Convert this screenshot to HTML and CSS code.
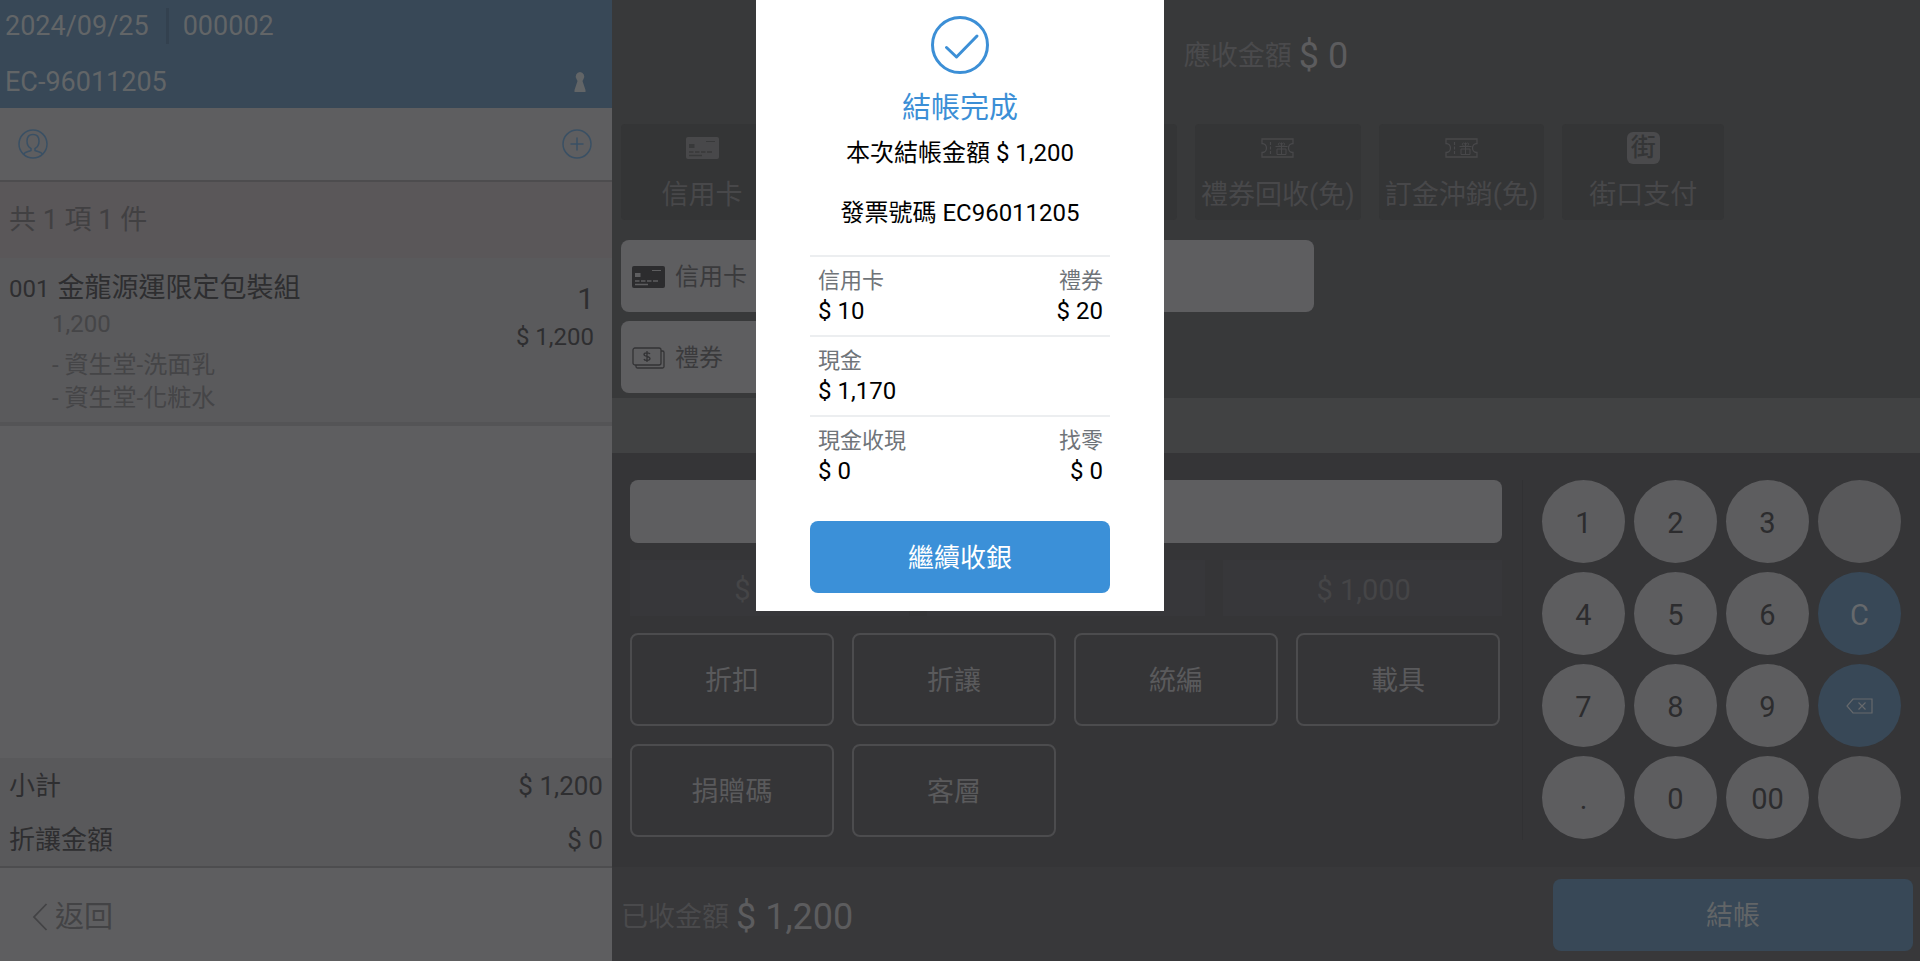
FILE: index.html
```html
<!DOCTYPE html>
<html lang="zh-Hant">
<head>
<meta charset="utf-8">
<meta name="viewport" content="width=device-width, initial-scale=1">
<title>結帳完成</title>
<link rel="stylesheet" href="styles.css">
</head>
<body>
<svg class="defs" aria-hidden="true">
  <symbol id="ticket" viewBox="0 0 33 20">
    <path d="M1 1h31v4.500a4.500 4.500 0 0 0 0 9V19H1v-4.500a4.500 4.500 0 0 0 0-9z" fill="none" stroke="currentColor" stroke-width="1.300"/>
    <path d="M9.500 4v12" stroke="currentColor" stroke-width="1.200" stroke-dasharray="3 1.500"/>
    <path d="M14.500 8.500h12M16 11v5.500h9V11zM20.500 4.500v12M20.500 8.500c-3.500 0-4-3.500-2-3.500s2 3.500 2 3.500 0-3.500 2-3.500 1.500 3.500-2 3.500" fill="none" stroke="currentColor" stroke-width="1"/>
  </symbol>
  <symbol id="card" viewBox="0 0 33 22">
    <rect width="33" height="22" rx="2" fill="currentColor"/>
    <g class="card-ink"><rect x="3" y="7" width="5.500" height="4"/><rect x="20" y="4" width="9" height="1"/>
    <path d="M3 15h4.500M9 15h4.500M15 15h4.500M21 15h5M3 18.500h13" fill="none" stroke-width="1.300"/></g>
  </symbol>
</svg>
<div class="pos">
  <aside class="order">
    <header class="order-head">
      <div class="head-line"><span>2024/09/25</span><span class="head-sep"></span><span>000002</span></div>
      <div class="head-line head-last"><span>EC-96011205</span>
        <svg class="pawn" viewBox="0 0 12 20" aria-hidden="true"><path d="M6 0a4.500 4.500 0 0 1 3.500 7L8.500 9l3 9v2H.5v-2l3-9-1-2A4.500 4.500 0 0 1 6 0z" fill="currentColor"/></svg>
      </div>
    </header>
    <div class="member">
      <button class="round-btn" type="button" aria-label="會員"><svg viewBox="0 0 30 30" aria-hidden="true"><circle cx="15" cy="15" r="14"/><path d="M13 19.500c-2-1-4-3.500-4-7.500s2-6.500 6-6.500 6 2.500 6 6.500-2 6.500-4 7.500M13 19v2.500c-3 1.500-6 1-7.500 4M17 19v2.500c3 1.500 6 1 7.500 4"/></svg></button>
      <button class="round-btn" type="button" aria-label="新增"><svg viewBox="0 0 30 30" aria-hidden="true"><circle cx="15" cy="15" r="14"/><path d="M15 8.500v13M8.500 15h13"/></svg></button>
    </div>
    <div class="count">共 1 項 1 件</div>
    <article class="item">
      <div class="item-main">
        <h2 class="item-name"><span class="item-no">001</span>金龍源運限定包裝組</h2>
        <p class="item-price">1,200</p>
        <ul class="item-subs"><li>- 資生堂-洗面乳</li><li>- 資生堂-化粧水</li></ul>
      </div>
      <div class="item-sum"><span class="item-qty">1</span><span>$ 1,200</span></div>
    </article>
    <dl class="totals">
      <div class="total-row"><dt>小計</dt><dd>$ 1,200</dd></div>
      <div class="total-row"><dt>折讓金額</dt><dd>$ 0</dd></div>
    </dl>
    <footer class="order-foot">
      <button class="back" type="button"><svg viewBox="0 0 16 28" aria-hidden="true"><path d="M14.500 1 2 14l12.500 13" fill="none" stroke="currentColor" stroke-width="1.800"/></svg>返回</button>
    </footer>
  </aside>

  <main class="checkout">
    <section class="due sum"><span class="sum-label">應收金額</span><span class="sum-value">$ 0</span></section>
    <section class="methods">
      <button class="method" type="button"><span class="method-icon"><svg class="icon-card" aria-hidden="true"><use href="#card"/></svg></span>信用卡</button>
      <span class="method method-blank"></span>
      <span class="method method-blank"></span>
      <button class="method" type="button"><span class="method-icon"><svg class="icon-ticket" aria-hidden="true"><use href="#ticket"/></svg></span>禮券回收(免)</button>
      <button class="method" type="button"><span class="method-icon"><svg class="icon-ticket" aria-hidden="true"><use href="#ticket"/></svg></span>訂金沖銷(免)</button>
      <button class="method" type="button"><span class="method-icon street">街</span>街口支付</button>
    </section>
    <section class="paid">
      <div class="paid-card"><svg class="icon-card" aria-hidden="true"><use href="#card"/></svg>信用卡</div>
      <div class="paid-card"></div>
      <div class="paid-card"><svg class="icon-cash" viewBox="0 0 33 22" fill="none" stroke="currentColor" stroke-width="1.300" aria-hidden="true"><rect x="1" y="1" width="28" height="17" rx="2"/><path d="M29 4h1.500a1.500 1.500 0 0 1 1.500 1.500v14a1.500 1.500 0 0 1-1.500 1.500h-25A1.500 1.500 0 0 1 4 19.500V18M18 7c-.5-1.500-6-1.800-6 .5S18 9 18 11.500s-5.500 2.500-6 .5M15 4v11"/></svg>禮券</div>
    </section>
    <div class="band"></div>
    <section class="entry">
      <div class="entry-main">
        <input class="amount" type="text" aria-label="金額">
        <div class="quick"><button type="button">$ 100</button><span></span><button type="button">$ 1,000</button></div>
        <div class="actions">
          <button type="button">折扣</button><button type="button">折讓</button><button type="button">統編</button><button type="button">載具</button>
          <button type="button">捐贈碼</button><button type="button">客層</button>
        </div>
      </div>
      <div class="keypad">
        <button type="button">1</button><button type="button">2</button><button type="button">3</button><span class="key-off"></span>
        <button type="button">4</button><button type="button">5</button><button type="button">6</button><button class="key-blue" type="button">C</button>
        <button type="button">7</button><button type="button">8</button><button type="button">9</button><button class="key-blue" type="button" aria-label="刪除"><svg viewBox="0 0 27 16" fill="none" stroke="currentColor" stroke-width="1.200" aria-hidden="true"><path d="M7 1h19v14H7L1 8zM12.500 4.500l7 7M19.500 4.500l-7 7"/></svg></button>
        <button type="button">.</button><button type="button">0</button><button type="button">00</button><span class="key-off"></span>
      </div>
    </section>
    <footer class="pay-foot">
      <div class="sum"><span class="sum-label">已收金額</span><span class="sum-value">$ 1,200</span></div>
      <button class="pay" type="button">結帳</button>
    </footer>
  </main>

  <section class="dialog" role="dialog" aria-labelledby="done">
    <svg class="done-icon" viewBox="0 0 58 58" fill="none" stroke="currentColor" stroke-width="3" stroke-linecap="round" stroke-linejoin="round" aria-hidden="true"><circle cx="29" cy="29" r="27.500"/><path d="M15.500 31.500 25.500 41 46 20"/></svg>
    <h1 class="done-title" id="done">結帳完成</h1>
    <p class="done-line">本次結帳金額 $ 1,200</p>
    <p class="done-line">發票號碼 EC96011205</p>
    <div class="splits">
      <dl class="split"><div><dt>信用卡</dt><dd>$ 10</dd></div><div class="split-end"><dt>禮券</dt><dd>$ 20</dd></div></dl>
      <dl class="split"><div><dt>現金</dt><dd>$ 1,170</dd></div></dl>
      <dl class="split"><div><dt>現金收現</dt><dd>$ 0</dd></div><div class="split-end"><dt>找零</dt><dd>$ 0</dd></div></dl>
    </div>
    <button class="continue" type="button">繼續收銀</button>
  </section>
</div>
</body>
</html>
```
FILE: styles.css
```css
* { box-sizing: border-box; }
body, h1, h2, p, ul, dl, dd { margin: 0; padding: 0; }
h1, h2 { font-weight: 400; }
ul { list-style: none; }
body {
  font-family: Roboto, "Noto Sans CJK TC", sans-serif;
  font-size: 27px;
  line-height: 36px;
  background: #38393a;
}
button, input { font: inherit; color: inherit; border: 0; margin: 0; padding: 0; background: none; }
svg { display: block; }
.defs { position: absolute; width: 0; height: 0; }

.pos {
  position: relative;
  display: grid;
  grid-template-columns: 51fr 109fr;
  min-height: 100vh;
}

/* order column */
.order { display: flex; flex-direction: column; background: #5e5e60; color: #2e2e30; }
.order-head { height: 108px; padding: 8px 5px; background: #384857; color: #626567; }
.head-line { display: flex; align-items: center; height: 36px; }
.head-last { justify-content: space-between; margin-top: 20px; padding-right: 21px; }
.head-sep { width: 3px; height: 36px; margin: 0 14px 0 17px; background: #33414f; }
.pawn { width: 12px; height: 20px; }
.member {
  display: flex; align-items: center; justify-content: space-between;
  height: 74px; padding: 0 20px 0 18px; border-bottom: 2px solid #4d4c4e;
}
.round-btn svg { width: 30px; height: 30px; fill: none; stroke: #3a5064; stroke-width: 1.5; }
.count { padding: 20px 9px; background: #5a5759; color: #414042; }
.item {
  display: flex; justify-content: space-between;
  padding: 12px 18px 7px 9px; background: #5a5a5c; border-bottom: 4px solid #545456;
  font-size: 24px;
}
.item-name { font-size: 27px; }
.item-no { margin-right: 8px; font-size: 24px; }
.item-price, .item-subs { padding-left: 43px; color: #454547; }
.item-price { line-height: 34px; }
.item-subs { margin-top: 8px; line-height: 33px; }
.item-sum { display: flex; flex-direction: column; align-items: flex-end; padding-top: 11px; }
.item-qty { font-size: 30px; margin-bottom: 2px; }
.totals { margin-top: auto; background: #59595b; border-bottom: 2px solid #4d4d4f; font-size: 26px; }
.total-row { display: flex; justify-content: space-between; align-items: center; height: 54px; padding: 2px 9px 0; }
.order-foot { display: flex; align-items: center; height: 93px; padding: 4px 32px 0; }
.back { display: flex; align-items: center; gap: 7px; font-size: 29px; color: #434345; }
.back svg { width: 16px; height: 28px; }

/* payment column */
.checkout { display: flex; flex-direction: column; }
.sum { display: flex; align-items: center; gap: 7px; }
.sum-label { color: #4a4a4c; }
.sum-value { font-size: 36px; color: #5c5c5e; }
.due { justify-content: center; height: 108px; padding-top: 3px; }
.methods { display: flex; gap: 18px; padding: 16px 9px 20px; }
.method {
  display: flex; flex-direction: column; align-items: center; gap: 13px;
  min-width: 162px; height: 96px; padding: 8px 6px 0;
  background: #343536; color: #48484a; border-radius: 4px;
}
.method-blank { min-width: 179px; }
.method-icon { display: grid; place-items: center; width: 33px; height: 32px; }
.icon-card { width: 33px; height: 22px; }
.icon-ticket { width: 33px; height: 20px; }
.icon-cash { width: 33px; height: 22px; color: #333335; }
.card-ink { fill: var(--ink, #38393a); stroke: var(--ink, #38393a); stroke-width: 0; }
.street { border-radius: 6px; background: #4a4a4c; color: #343536; font-size: 25px; font-weight: 500; line-height: 32px; }
.paid { display: grid; grid-template-columns: repeat(2, 342px); gap: 9px; padding: 0 9px 5px; }
.paid-card {
  display: flex; align-items: center; gap: 10px; height: 72px; padding: 2px 11px 0;
  border-radius: 8px; background: #5e5e60; color: #3a3a3c; font-size: 24px;
}
.paid-card .icon-card { --ink: #5e5e60; color: #2c2c2e; }
.band { height: 55px; background: #414243; }
.entry { display: flex; flex: 1; padding: 27px 19px 27px 18px; background: #353537; }
.entry-main { flex: 1; padding-right: 20px; }
.amount { display: block; width: 100%; height: 63px; padding: 0 12px; border-radius: 8px; background: #5e5e60; color: #2e2e30; }
.quick { display: grid; grid-template-columns: repeat(3, 1fr); gap: 18px; margin: 17px 0; }
.quick > * { height: 56px; padding: 4px 0 0 2px; background: #37373a; color: #454547; font-size: 29px; }
.actions { display: grid; grid-template-columns: repeat(4, 1fr); gap: 18px; padding-right: 2px; }
.actions button { height: 93px; padding-top: 2px; border: 2px solid #4c4c4e; border-radius: 8px; color: #5a5a5c; }
.keypad {
  display: grid; grid-template-columns: repeat(4, 83px); grid-auto-rows: 83px; gap: 9px;
  align-content: start; padding-left: 19px; border-left: 1px solid #313133;
}
.keypad > * { padding-top: 2px; border-radius: 50%; background: #5d5d5f; color: #2c2c2e; font-size: 29px; }
.keypad .key-off { background: #58585a; }
.keypad .key-blue { background: #384857; color: #66696c; }
.keypad .key-blue:has(svg) { padding-top: 0; }
.key-blue svg { width: 27px; height: 16px; margin: 0 auto; }
.pay-foot { display: flex; align-items: center; justify-content: space-between; height: 94px; padding: 2px 7px 0 9px; background: #38383a; }
.pay-foot .sum { padding-top: 3px; }
.pay { width: 360px; height: 72px; padding-top: 2px; border-radius: 8px; background: #384857; color: #626567; }

/* completed-payment dialog */
.dialog {
  position: absolute; top: 0; left: 50%; transform: translateX(-50%);
  display: flex; flex-direction: column; align-items: center;
  width: 408px; padding: 16px 54px 18px; background: #fff; color: #000; font-size: 24px;
}
.done-icon { width: 58px; height: 58px; color: #3c8fd6; }
.done-title { margin-top: 16px; font-size: 29px; color: #3c8fd6; }
.done-line { margin-top: 9px; }
.done-line + .done-line { margin-top: 24px; }
.splits { align-self: stretch; margin: 24px 0 26px; }
.split { display: flex; justify-content: space-between; height: 80px; padding: 8px 7px 0 8px; border-top: 2px solid #eceef0; line-height: 31px; }
.split-end { text-align: right; }
.split dt { font-size: 22px; color: #6f7479; }
.continue { align-self: stretch; height: 72px; padding-top: 2px; border-radius: 8px; background: #3b90d8; color: #fff; font-size: 26px; }
```
